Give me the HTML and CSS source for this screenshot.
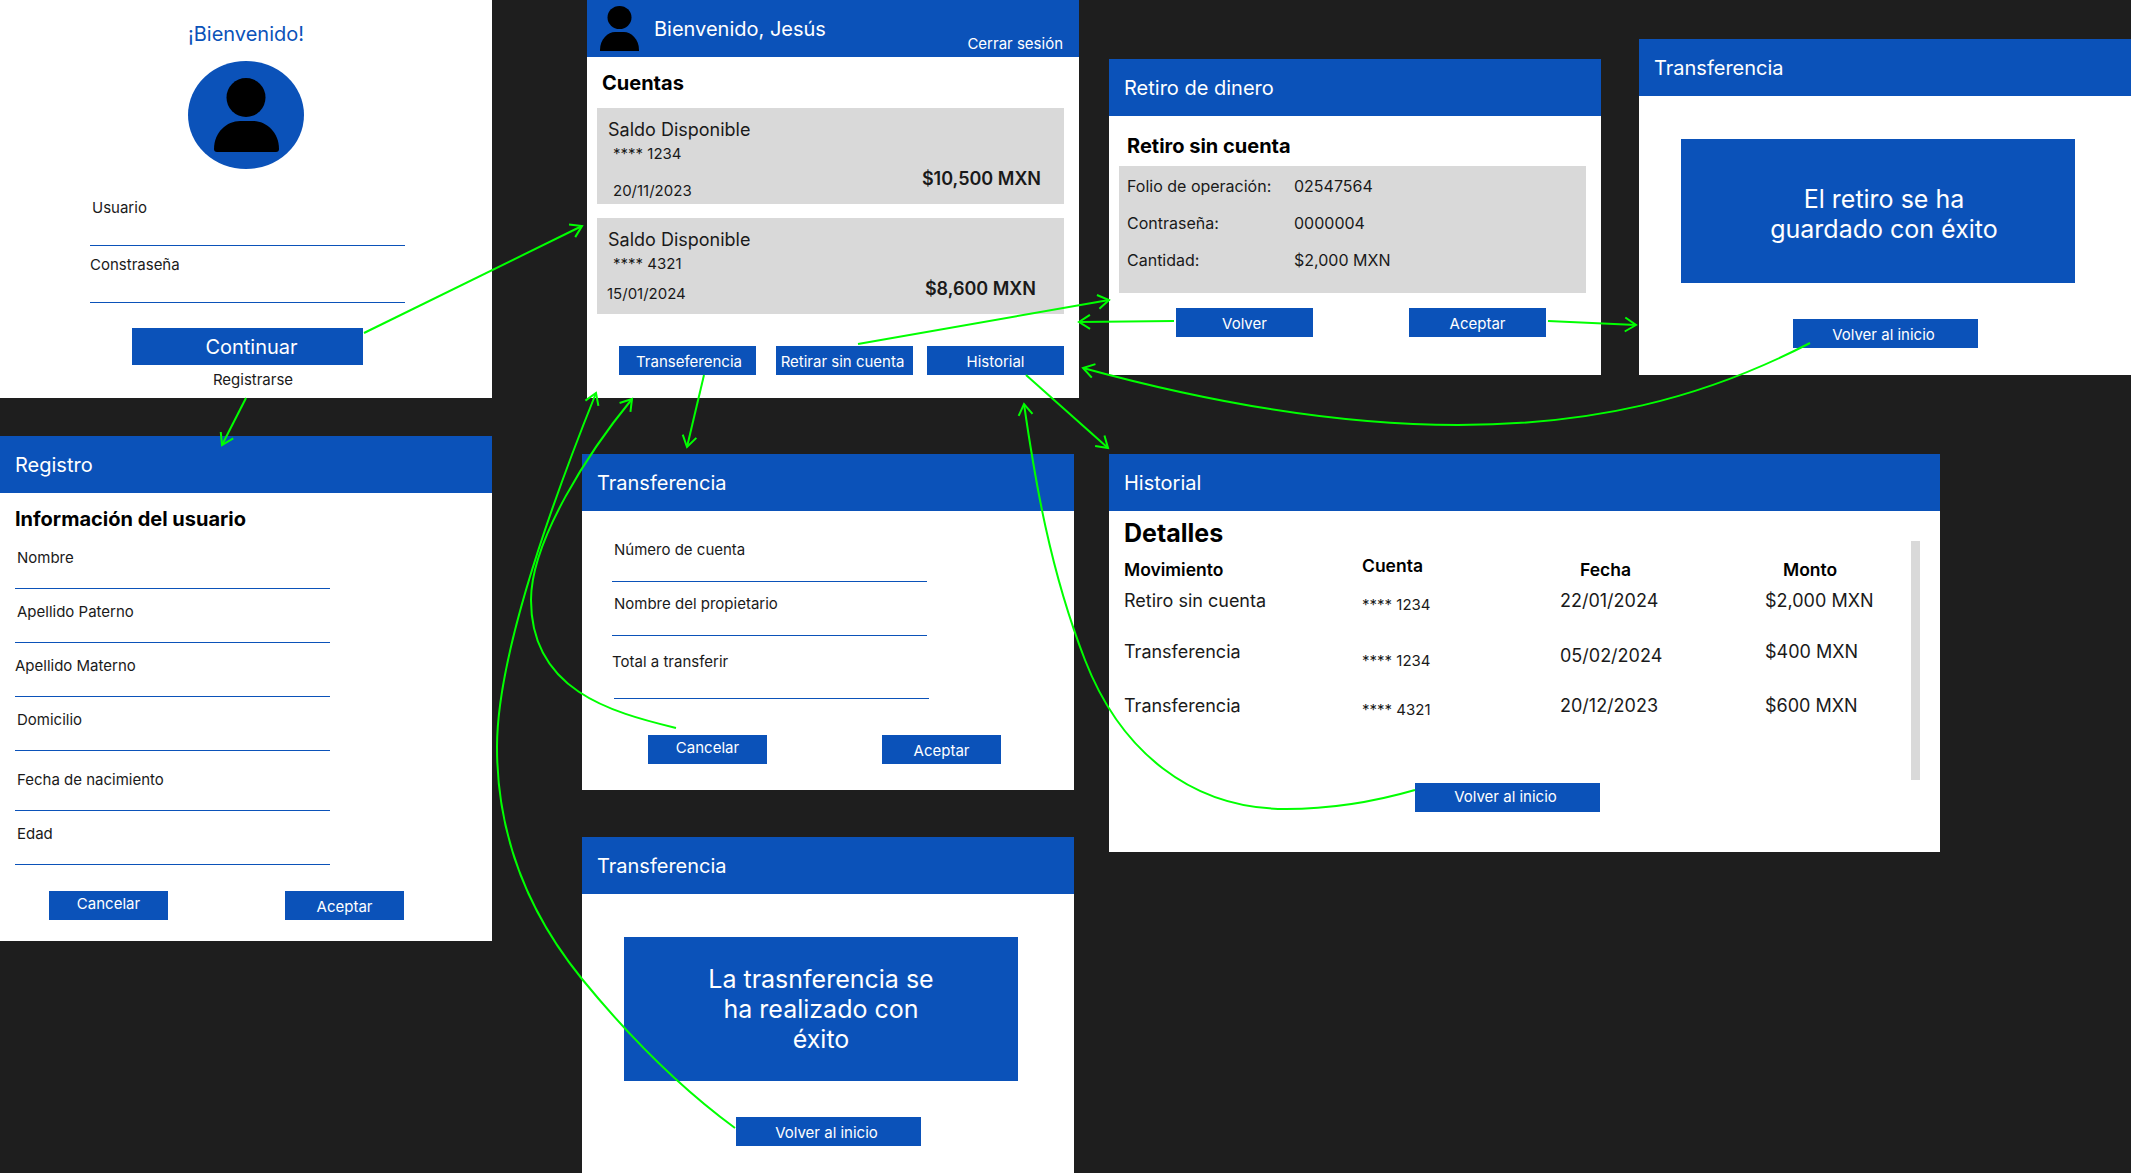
FILE: index.html
```html
<!DOCTYPE html>
<html lang="es">
	<head>
		<meta charset="utf-8">
		<title>Flujo de pantallas - Banca</title>
		<link rel="stylesheet" href="styles.css">
	</head>
	<body>
		<div id="canvas">

			<!-- Inicio de sesión -->
			<section class="screen" id="login">
				<h2 class="login-title">¡Bienvenido!</h2>
				<svg class="login-avatar" width="116" height="108" viewBox="0 0 116 108">
					<ellipse cx="58" cy="54" rx="58" ry="54" fill="#0b52b9"/>
					<ellipse cx="58" cy="36.5" rx="19.5" ry="19.5"/>
					<path d="M26 88C26 71 39 60 52 60H65C78 60 91 71 91 88C91 90 90 91 88 91H29C27 91 26 90 26 88Z"/>
				</svg>
				<div class="field field-user"><span class="indent">Usuario</span></div>
				<div class="field field-pass"><span>Constraseña</span></div>
				<a class="btn btn-big">Continuar</a>
				<p class="login-link">Registrarse</p>
			</section>

			<!-- Registro -->
			<section class="screen" id="registro">
				<header class="screen-head">Registro</header>
				<div class="body-form">
					<h3 class="title-md">Información del usuario</h3>
					<div class="field"><span class="indent">Nombre</span></div>
					<div class="field"><span class="indent">Apellido Paterno</span></div>
					<div class="field"><span>Apellido Materno</span></div>
					<div class="field"><span class="indent">Domicilio</span></div>
					<div class="field field-tall"><span class="indent">Fecha de nacimiento</span></div>
					<div class="field"><span class="indent">Edad</span></div>
					<div class="actions actions-reg">
						<a class="btn btn-sm btn-high">Cancelar</a>
						<a class="btn btn-sm btn-low">Aceptar</a>
					</div>
				</div>
			</section>

			<!-- Cuentas -->
			<section class="screen" id="cuentas">
				<header class="screen-head head-home">
					<svg class="head-avatar" width="39" height="45" viewBox="0 0 39 45">
						<ellipse cx="19.5" cy="11.5" rx="12" ry="11.5"/>
						<path d="M0 44C0 33 8 26 15 26H24C31 26 39 33 39 44C39 45 39 45 38 45H1C0 45 0 45 0 44Z"/>
					</svg>
					<span>Bienvenido, Jesús</span>
					<a class="logout">Cerrar sesión</a>
				</header>
				<div class="body-home">
					<h3 class="title-md">Cuentas</h3>
					<div class="card">
						<div>
							<p class="card-label">Saldo Disponible</p>
							<p class="card-number">**** 1234</p>
							<p class="card-date">20/11/2023</p>
						</div>
						<p class="card-amount">$10,500 MXN</p>
					</div>
					<div class="card card-alt">
						<div>
							<p class="card-label">Saldo Disponible</p>
							<p class="card-number">**** 4321</p>
							<p class="card-date">15/01/2024</p>
						</div>
						<p class="card-amount">$8,600 MXN</p>
					</div>
					<div class="actions actions-home">
						<a class="btn btn-right">Transeferencia</a>
						<a class="btn btn-left">Retirar sin cuenta</a>
						<a class="btn">Historial</a>
					</div>
				</div>
			</section>

			<!-- Retiro -->
			<section class="screen" id="retiro">
				<header class="screen-head">Retiro de dinero</header>
				<div class="body-retiro">
					<h3 class="retiro-title">Retiro sin cuenta</h3>
					<div class="panel">
						<p class="panel-row"><span>Folio de operación:</span><span>02547564</span></p>
						<p class="panel-row"><span>Contraseña:</span><span>0000004</span></p>
						<p class="panel-row"><span>Cantidad:</span><span>$2,000 MXN</span></p>
					</div>
					<div class="actions actions-retiro">
						<a class="btn">Volver</a>
						<a class="btn">Aceptar</a>
					</div>
				</div>
			</section>

			<!-- Retiro guardado -->
			<section class="screen" id="retiro-ok">
				<header class="screen-head">Transferencia</header>
				<div class="notice notice-shift">El retiro se ha<br>guardado con éxito</div>
				<a class="btn btn-wide btn-left">Volver al inicio</a>
			</section>

			<!-- Formulario de transferencia -->
			<section class="screen" id="transferencia">
				<header class="screen-head">Transferencia</header>
				<div class="body-trans">
					<div class="field field-t1"><span class="indent">Número de cuenta</span></div>
					<div class="field field-t2"><span class="indent">Nombre del propietario</span></div>
					<div class="field field-t3"><span>Total a transferir</span></div>
					<div class="actions actions-trans">
						<a class="btn btn-sm btn-high">Cancelar</a>
						<a class="btn btn-sm btn-low">Aceptar</a>
					</div>
				</div>
			</section>

			<!-- Transferencia realizada -->
			<section class="screen" id="trans-ok">
				<header class="screen-head">Transferencia</header>
				<div class="notice">La trasnferencia se<br>ha realizado con<br>éxito</div>
				<a class="btn btn-wide btn-left">Volver al inicio</a>
			</section>

			<!-- Historial -->
			<section class="screen" id="historial">
				<header class="screen-head">Historial</header>
				<div class="body-hist">
					<h3 class="hist-title">Detalles</h3>
					<div class="hist-table">
						<b class="pad-4">Movimiento</b>
						<b>Cuenta</b>
						<b class="pad-4 col-fecha">Fecha</b>
						<b class="pad-4 col-monto">Monto</b>

						<span>Retiro sin cuenta</span>
						<span class="hist-num pad-6">**** 1234</span>
						<span>22/01/2024</span>
						<span>$2,000 MXN</span>

						<span>Transferencia</span>
						<span class="hist-num pad-11">**** 1234</span>
						<span class="pad-4">05/02/2024</span>
						<span>$400 MXN</span>

						<span>Transferencia</span>
						<span class="hist-num pad-6">**** 4321</span>
						<span>20/12/2023</span>
						<span>$600 MXN</span>
					</div>
					<a class="btn btn-wide btn-hist">Volver al inicio</a>
				</div>
				<div class="scrollbar"></div>
			</section>

			<!-- Flechas del flujo -->
			<svg class="arrows" width="2131" height="1173" viewBox="0 0 2131 1173">
				<defs>
					<marker id="head" markerUnits="userSpaceOnUse" markerWidth="18" markerHeight="18" refX="14" refY="9" orient="auto">
						<path d="M3 2L14 9L3 16" fill="none" stroke="#00ff00" stroke-width="2"/>
					</marker>
				</defs>
				<g fill="none" stroke="#00ff00" stroke-width="2" marker-end="url(#head)">
					<path d="M364 333L582 226"/>
					<path d="M246 398L222 445"/>
					<path d="M704 375L687 447"/>
					<path d="M858 344L1109 300"/>
					<path d="M1174 321L1079 322"/>
					<path d="M1548 321L1636 325"/>
					<path d="M1026 375L1108 448"/>
					<path d="M1810 343C1700 400 1590 425 1458 425C1330 425 1200 400 1083 368"/>
					<path d="M1415 790C1370 803 1330 809 1286 809C1190 809 1120 750 1085 660C1050 570 1035 480 1024 404"/>
					<path d="M676 728C610 712 531 690 531 600C531 540 590 450 632 399"/>
					<path d="M735 1128C690 1095 640 1050 582 979C530 915 497 840 497 747C497 660 545 520 596 393"/>
				</g>
			</svg>
		</div>
	</body>
</html>
```

FILE: styles.css
```css
* {
	margin: 0px;
	padding: 0px;
	box-sizing: border-box;
}

body {
	background-color: #1e1e1e;
	font-family: "Inter", "Liberation Sans", sans-serif;
	color: #1a1a1a;
}

#canvas {
	position: relative;
	width: 2131px;
	height: 1173px;
	overflow: hidden;
}

/* cada pantalla va suelta en el lienzo */
.screen {
	position: absolute;
	width: 492px;
	background-color: #fff;
}

#login { left: 0; top: 0; height: 398px; }
#registro { left: 0; top: 436px; height: 505px; }
#cuentas { left: 587px; top: 0; height: 398px; }
#retiro { left: 1109px; top: 59px; height: 316px; }
#retiro-ok { left: 1639px; top: 39px; height: 336px; }
#transferencia { left: 582px; top: 454px; height: 336px; }
#trans-ok { left: 582px; top: 837px; height: 336px; }
#historial { left: 1109px; top: 454px; width: 831px; height: 398px; }

.screen-head {
	display: flex;
	align-items: center;
	height: 57px;
	padding-left: 15px;
	background-color: #0b52b9;
	color: #fff;
	font-size: 20px;
}

.btn {
	display: flex;
	align-items: center;
	justify-content: center;
	width: 137px;
	height: 29px;
	padding-top: 1px;
	background-color: #0b52b9;
	color: #fff;
	font-size: 15px;
}

.btn-sm { width: 119px; }
.btn-high { padding: 0 0 5px; }
.btn-low { padding-top: 1px; }
.btn-right { padding-left: 3px; }
.btn-left { padding-right: 4px; }

.btn-wide {
	width: 185px;
	margin: 36px 0 0 154px;
}

.actions {
	display: flex;
}

.title-md {
	font-size: 20px;
	line-height: 24px;
	color: #000;
}

.field {
	width: 315px;
	height: 54px;
	padding-top: 14px;
	border-bottom: 1px solid #0b52b9;
	font-size: 15px;
	line-height: 17px;
}

.indent {
	padding-left: 2px;
}

/* login */
.login-title {
	margin-top: 22px;
	font-size: 20px;
	font-weight: 400;
	line-height: 24px;
	text-align: center;
	color: #0b52b9;
}

.login-avatar {
	display: block;
	margin: 15px 0 0 188px;
}

.field-user {
	height: 77px;
	margin-left: 90px;
	padding-top: 30px;
}

.field-pass {
	height: 57px;
	margin-left: 90px;
	padding-top: 10px;
}

.btn-big {
	width: 231px;
	height: 37px;
	margin: 25px 0 0 132px;
	padding-left: 8px;
	font-size: 20px;
}

.login-link {
	margin: 6px 0 0 14px;
	font-size: 15px;
	line-height: 18px;
	text-align: center;
}

/* registro */
.body-form {
	padding: 14px 0 0 15px;
}

.body-form .title-md {
	margin-bottom: 4px;
}

.field-tall {
	height: 60px;
	padding-top: 20px;
}

.actions-reg {
	gap: 117px;
	margin: 26px 0 0 34px;
}

/* cuentas */
.head-home {
	padding: 0 16px 0 13px;
}

.head-avatar {
	align-self: flex-start;
	margin: 6px 15px 0 0;
}

.logout {
	align-self: flex-end;
	margin-left: auto;
	padding-bottom: 5px;
	font-size: 15px;
	line-height: 17px;
}

.body-home {
	padding-top: 14px;
}

.body-home .title-md {
	margin: 0 0 13px 15px;
}

.card {
	display: flex;
	justify-content: space-between;
	width: 467px;
	height: 96px;
	margin-left: 10px;
	padding: 11px 23px 0 11px;
	background-color: #d9d9d9;
}

.card-alt {
	margin-top: 14px;
	padding-right: 28px;
}

.card-label {
	font-size: 18px;
	line-height: 22px;
}

.card-number {
	margin-top: 4px;
	padding-left: 5px;
	font-size: 15px;
	line-height: 17px;
}

.card-date {
	margin-top: 20px;
	padding-left: 5px;
	font-size: 15px;
	line-height: 18px;
}

.card-alt .card-date {
	margin: 13px 0 0 -1px;
	padding-left: 0;
}

.card-amount {
	padding-top: 49px;
	font-size: 18px;
	font-weight: 600;
	line-height: 22px;
}

.actions-home {
	gap: 14px;
	margin: 32px 0 0 32px;
}

.actions-home .btn:first-child {
	margin-right: 6px;
}

/* retiro */
.body-retiro {
	padding-top: 19px;
}

.retiro-title {
	margin-left: 18px;
	font-size: 20px;
	line-height: 22px;
	color: #000;
}

.panel {
	width: 467px;
	height: 127px;
	margin: 9px 0 0 10px;
	padding: 1px 0 0 8px;
	background-color: #d9d9d9;
}

.panel-row {
	display: flex;
	height: 37px;
	align-items: center;
	font-size: 16px;
}

.panel-row span:first-child {
	width: 167px;
}

.actions-retiro {
	gap: 96px;
	margin: 15px 0 0 67px;
}

/* avisos */
.notice {
	display: flex;
	align-items: center;
	justify-content: center;
	width: 394px;
	height: 144px;
	margin: 43px 0 0 42px;
	background-color: #0b52b9;
	color: #fff;
	font-size: 25px;
	line-height: 30px;
	text-align: center;
}

.notice-shift {
	padding: 6px 0 0 12px;
}

/* transferencia */
.body-trans {
	padding-left: 30px;
}

.field-t1 {
	height: 71px;
	padding-top: 30px;
}

.field-t2 {
	padding-top: 13px;
}

.field-t3 {
	height: 63px;
	margin-left: 2px;
	padding-top: 17px;
}

.field-t3 span {
	margin-left: -2px;
}

.actions-trans {
	gap: 115px;
	margin: 36px 0 0 36px;
}

/* historial */
.body-hist {
	padding: 6px 0 0 15px;
}

.hist-title {
	margin-bottom: 7px;
	font-size: 25px;
	line-height: 32px;
	color: #000;
}

.hist-table {
	display: grid;
	grid-template-columns: 238px 198px 205px auto;
	grid-template-rows: 34px 51px 54px 39px;
	font-size: 18px;
	line-height: 22px;
}

.hist-table b {
	font-size: 17.5px;
	font-weight: 600;
	line-height: 20px;
	color: #000;
}

.col-fecha { padding-left: 20px; }
.col-monto { padding-left: 18px; }

.hist-num {
	font-size: 15px;
	line-height: 18px;
}

.pad-4 { padding-top: 4px; }
.pad-6 { padding-top: 6px; }
.pad-11 { padding-top: 11px; }

.btn-hist {
	margin: 49px 0 0 291px;
	padding: 0 4px 2px 0;
}

.scrollbar {
	position: absolute;
	left: 802px;
	top: 87px;
	width: 9px;
	height: 239px;
	background-color: #d9d9d9;
}

/* flechas encima de todo */
.arrows {
	position: absolute;
	left: 0;
	top: 0;
	pointer-events: none;
}
```
